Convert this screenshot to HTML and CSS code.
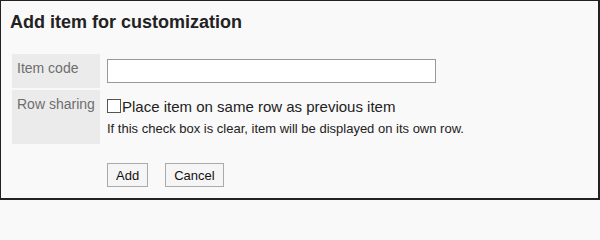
FILE: index.html
```html
<!DOCTYPE html>
<html>
<head>
<meta charset="utf-8">
<link rel="stylesheet" href="styles.css">
</head>
<body>
<div class="frame">
  <h1 class="title">Add item for customization</h1>
  <table class="form">
    <tr>
      <th class="label label-short">Item code</th>
      <td class="field"><input class="text-input" type="text"></td>
    </tr>
    <tr>
      <th class="label label-tall">Row sharing</th>
      <td class="field">
        <label class="check-row"><span class="checkbox"></span><span class="check-text">Place item on same row as previous item</span></label>
        <div class="help">If this check box is clear, item will be displayed on its own row.</div>
      </td>
    </tr>
  </table>
  <div class="buttons">
    <button class="btn" type="button">Add</button>
    <button class="btn" type="button">Cancel</button>
  </div>
</div>
</body>
</html>
```
FILE: styles.css
```css
html, body {
  margin: 0;
  padding: 0;
  width: 600px;
  height: 200px;
  overflow: hidden;
  background: #f9f9f9;
}
body {
  font-family: "Liberation Sans", Arial, sans-serif;
  color: #333;
}
.frame {
  box-sizing: border-box;
  width: 600px;
  height: 200px;
  background: #f9f9f9;
  border-style: solid;
  border-color: #222;
  border-width: 1px 2px 2px 1px;
  padding: 0 0 0 9px;
}
.title {
  margin: 0;
  padding-top: 11px;
  font-size: 18px;
  line-height: 21px;
  font-weight: bold;
  color: #222;
}
.form {
  border-collapse: separate;
  border-spacing: 2px;
  margin-top: 19px;
  margin-left: 0;
}
.label {
  box-sizing: border-box;
  width: 88px;
  background: #ebebeb;
  color: #6e6e6e;
  font-weight: normal;
  font-size: 14px;
  text-align: left;
  vertical-align: top;
  padding: 6px 4px 0 5px;
  line-height: 16px;
  white-space: nowrap;
}
.label-short { height: 34px; }
.label-tall { height: 54px; }
.field {
  vertical-align: top;
  padding: 0 0 0 5px;
}
.text-input {
  box-sizing: border-box;
  width: 329px;
  height: 24px;
  margin: 5px 0 0 0;
  border: 1px solid #999;
  background: #fff;
  padding: 0;
  display: block;
}
.check-row {
  display: flex;
  align-items: center;
  margin-top: 7px;
  height: 18px;
}
.checkbox {
  box-sizing: border-box;
  width: 14px;
  height: 14px;
  border: 1px solid #555;
  background: #fff;
  margin-right: 1px;
}
.check-text {
  font-size: 15px;
  color: #222;
}
.help {
  font-size: 13px;
  color: #222;
  margin-top: 6px;
  line-height: 15px;
}
.buttons {
  display: flex;
  gap: 17px;
  margin: 17px 0 0 97px;
}
.btn {
  box-sizing: border-box;
  height: 24px;
  padding: 0 8px;
  font-family: "Liberation Sans", Arial, sans-serif;
  font-size: 13px;
  color: #111;
  background: #f5f5f5;
  border: 1px solid #aaa;
  border-radius: 0;
}
```
